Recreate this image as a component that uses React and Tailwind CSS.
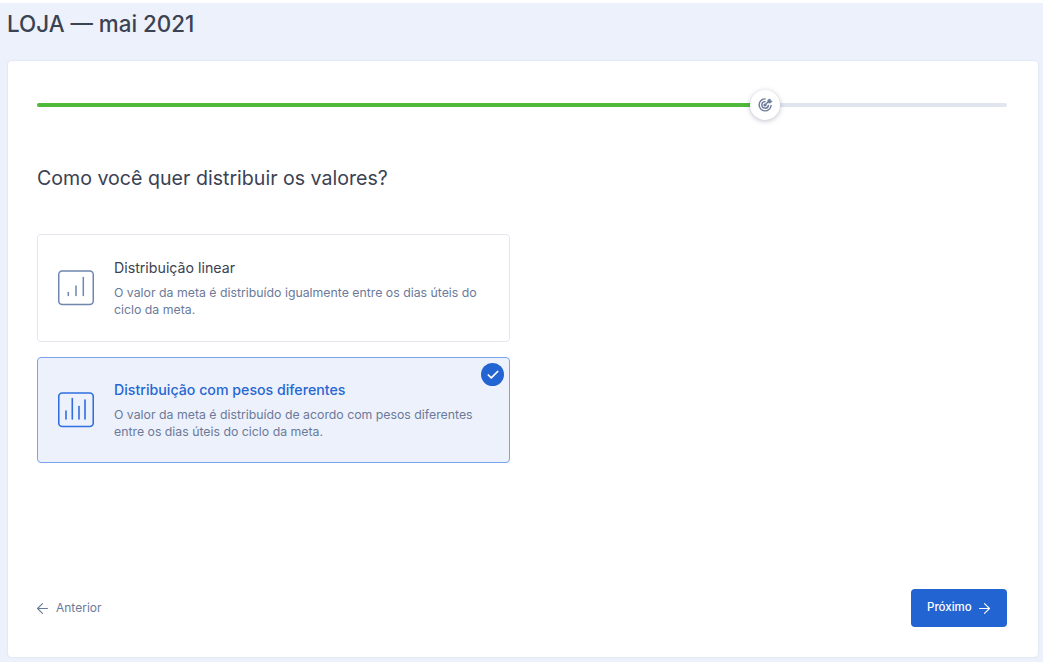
import React from "react";
import { ArrowLeft, ArrowRight, Check } from "lucide-react";

const font = { fontFamily: "Inter, 'Liberation Sans', sans-serif" };

const TargetIcon = () => (
  <svg width="16" height="16" viewBox="0 0 16 16" fill="none" stroke="#6b7a99" strokeWidth="1.4" strokeLinecap="round">
    <path d="M8.2 1.9a6 6 0 1 0 5.9 6.6" />
    <path d="M8.2 4.6a3.3 3.3 0 1 0 3.2 3.9" />
    <circle cx="8" cy="8" r="0.9" fill="#6b7a99" />
    <path d="M8 8l4-4" />
    <path d="M11 2.8l2.2-.8.3 1.9 1.7.3-1.8 1.9-2.2-.4z" fill="#6b7a99" strokeWidth="0.6" strokeLinejoin="round" />
  </svg>
);

const LinearIcon = () => (
  <svg width="36" height="36" viewBox="0 0 36 36" fill="none" stroke="#6f86ad" strokeWidth="1.5" strokeLinecap="round">
    <rect x="0.75" y="1" width="34.5" height="33.5" rx="3.5" />
    <path d="M10.3 22.5v3" />
    <path d="M18 16v9.5" />
    <path d="M25.3 7.5v18" />
  </svg>
);

const WeightsIcon = () => (
  <svg width="36" height="36" viewBox="0 0 36 36" fill="none" stroke="#2f6fe0" strokeWidth="1.6" strokeLinecap="round">
    <rect x="0.75" y="1" width="34.5" height="33.5" rx="3.5" />
    <path d="M8 19v8" />
    <path d="M14.3 6.5v20.5" />
    <path d="M21 14.5v12.5" />
    <path d="M27 8v19" />
  </svg>
);

const OptionCard = ({ icon, title, description, selected }) => (
  <div
    className={`relative flex items-center w-[473px] rounded border pl-[20px] ${
      selected
        ? "h-[106px] bg-[#edf1fc] border-[#7ba3ea]"
        : "h-[108px] bg-white border-[#e3e6ef]"
    }`}
  >
    <div className="shrink-0 w-[36px] h-[36px]">{icon}</div>
    <div className="ml-[20px]">
      <div className={`text-[14.2px] leading-[20px] ${selected ? "font-medium text-[#2767d2]" : "text-[#3b4252]"}`}>
        {title}
      </div>
      <p className="mt-[6px] w-[375px] text-[12.3px] leading-[17px] text-[#6b7a99]">{description}</p>
    </div>
    {selected && (
      <div className="absolute top-[5px] right-[5px] w-[23px] h-[23px] rounded-full bg-[#2264d1] flex items-center justify-center">
        <Check size={14} color="white" strokeWidth={3} />
      </div>
    )}
  </div>
);

export default function App() {
  return (
    <div style={font} className="h-[662px] w-[1043px] overflow-hidden bg-white pt-[3px]">
      <div className="h-[659px] bg-[#edf1fb] flex flex-col px-[7px] pb-[5px]">
        <h1 className="h-[58px] pt-[7px] text-[22.4px] leading-[28px] font-medium text-[#3b4252]">LOJA — mai 2021</h1>
        <div className="ml-[1px] mr-[-2px] flex-1 bg-white rounded shadow-[0_0_2px_rgba(90,110,160,0.2)] pl-[29px] pr-[31px] pt-[42px] pb-[30px] flex flex-col">
          <div className="relative h-[4px] bg-[#e1e5ee] rounded-full">
            <div className="h-full w-[728px] bg-[#4fb93a] rounded-full"></div>
            <div className="absolute left-[713px] top-[-13px] w-[30px] h-[30px] rounded-full bg-white shadow-[0_1px_5px_rgba(60,70,100,0.35)] flex items-center justify-center">
              <TargetIcon />
            </div>
          </div>
          <h2 className="mt-[58px] text-[19.6px] leading-[26px] text-[#3b4252]">Como você quer distribuir os valores?</h2>
          <div className="mt-[43px] flex flex-col gap-[15px]">
            <OptionCard
              icon={<LinearIcon />}
              title="Distribuição linear"
              description="O valor da meta é distribuído igualmente entre os dias úteis do ciclo da meta."
            />
            <OptionCard
              selected
              icon={<WeightsIcon />}
              title="Distribuição com pesos diferentes"
              description="O valor da meta é distribuído de acordo com pesos diferentes entre os dias úteis do ciclo da meta."
            />
          </div>
          <div className="mt-auto flex items-center justify-between">
            <button className="flex items-center gap-[5px] text-[12px] text-[#6b7a99]">
              <ArrowLeft size={17} strokeWidth={1.5} className="-ml-[3px]" />
              Anterior
            </button>
            <button className="w-[96px] h-[38px] pl-[16px] rounded bg-[#2264d1] text-white text-[11.5px] font-medium flex items-center gap-[4px]">
              Próximo
              <ArrowRight size={17} strokeWidth={1.5} />
            </button>
          </div>
        </div>
      </div>
    </div>
  );
}
